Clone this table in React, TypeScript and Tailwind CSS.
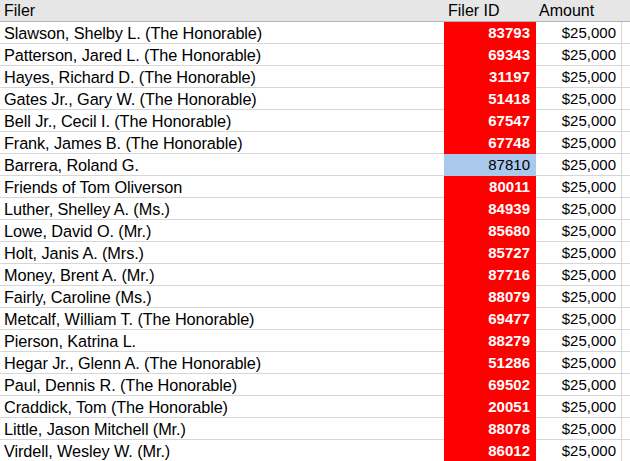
import React from 'react';

type Row = { filer: string; id: string; amount: string; selected?: boolean };

const rows: Row[] = [
  { filer: 'Slawson, Shelby L. (The Honorable)', id: '83793', amount: '$25,000' },
  { filer: 'Patterson, Jared L. (The Honorable)', id: '69343', amount: '$25,000' },
  { filer: 'Hayes, Richard D. (The Honorable)', id: '31197', amount: '$25,000' },
  { filer: 'Gates Jr., Gary W. (The Honorable)', id: '51418', amount: '$25,000' },
  { filer: 'Bell Jr., Cecil I. (The Honorable)', id: '67547', amount: '$25,000' },
  { filer: 'Frank, James B. (The Honorable)', id: '67748', amount: '$25,000' },
  { filer: 'Barrera, Roland G.', id: '87810', amount: '$25,000', selected: true },
  { filer: 'Friends of Tom Oliverson', id: '80011', amount: '$25,000' },
  { filer: 'Luther, Shelley A. (Ms.)', id: '84939', amount: '$25,000' },
  { filer: 'Lowe, David O. (Mr.)', id: '85680', amount: '$25,000' },
  { filer: 'Holt, Janis A. (Mrs.)', id: '85727', amount: '$25,000' },
  { filer: 'Money, Brent A. (Mr.)', id: '87716', amount: '$25,000' },
  { filer: 'Fairly, Caroline (Ms.)', id: '88079', amount: '$25,000' },
  { filer: 'Metcalf, William T. (The Honorable)', id: '69477', amount: '$25,000' },
  { filer: 'Pierson, Katrina L.', id: '88279', amount: '$25,000' },
  { filer: 'Hegar Jr., Glenn A. (The Honorable)', id: '51286', amount: '$25,000' },
  { filer: 'Paul, Dennis R. (The Honorable)', id: '69502', amount: '$25,000' },
  { filer: 'Craddick, Tom (The Honorable)', id: '20051', amount: '$25,000' },
  { filer: 'Little, Jason Mitchell (Mr.)', id: '88078', amount: '$25,000' },
  { filer: 'Virdell, Wesley W. (Mr.)', id: '86012', amount: '$25,000' },
];

export default function App() {
  return (
    <div
      className="w-[630px] h-[461px] overflow-hidden bg-white text-black text-[15px]"
      style={{ fontFamily: '"Liberation Sans", Arial, sans-serif' }}
    >
      <div className="grid grid-cols-[444px_92px_86px_1fr] h-[22px] bg-[#e6e6e6] border-b border-[#b4b4b4] leading-[21px] text-[16px]">
        <div className="pl-1">Filer</div>
        <div className="pl-1">Filer ID</div>
        <div className="pl-[3px]">Amount</div>
        <div />
      </div>
      {rows.map((r) => (
        <div
          key={r.id}
          className="grid grid-cols-[444px_92px_86px_1fr] h-[22px] border-b border-[#d6d6d6] leading-[22px]"
        >
          <div className="pl-1 whitespace-nowrap text-[16.3px] tracking-[-0.1px]">{r.filer}</div>
          <div
            className={
              r.selected
                ? 'bg-[#a9c8eb] text-right pr-[6px]'
                : 'bg-[#ff0000] text-white font-bold text-right pr-[6px]'
            }
          >
            {r.id}
          </div>
          <div className="text-right pr-[5px] border-r border-[#d6d6d6]">{r.amount}</div>
          <div />
        </div>
      ))}
    </div>
  );
}
